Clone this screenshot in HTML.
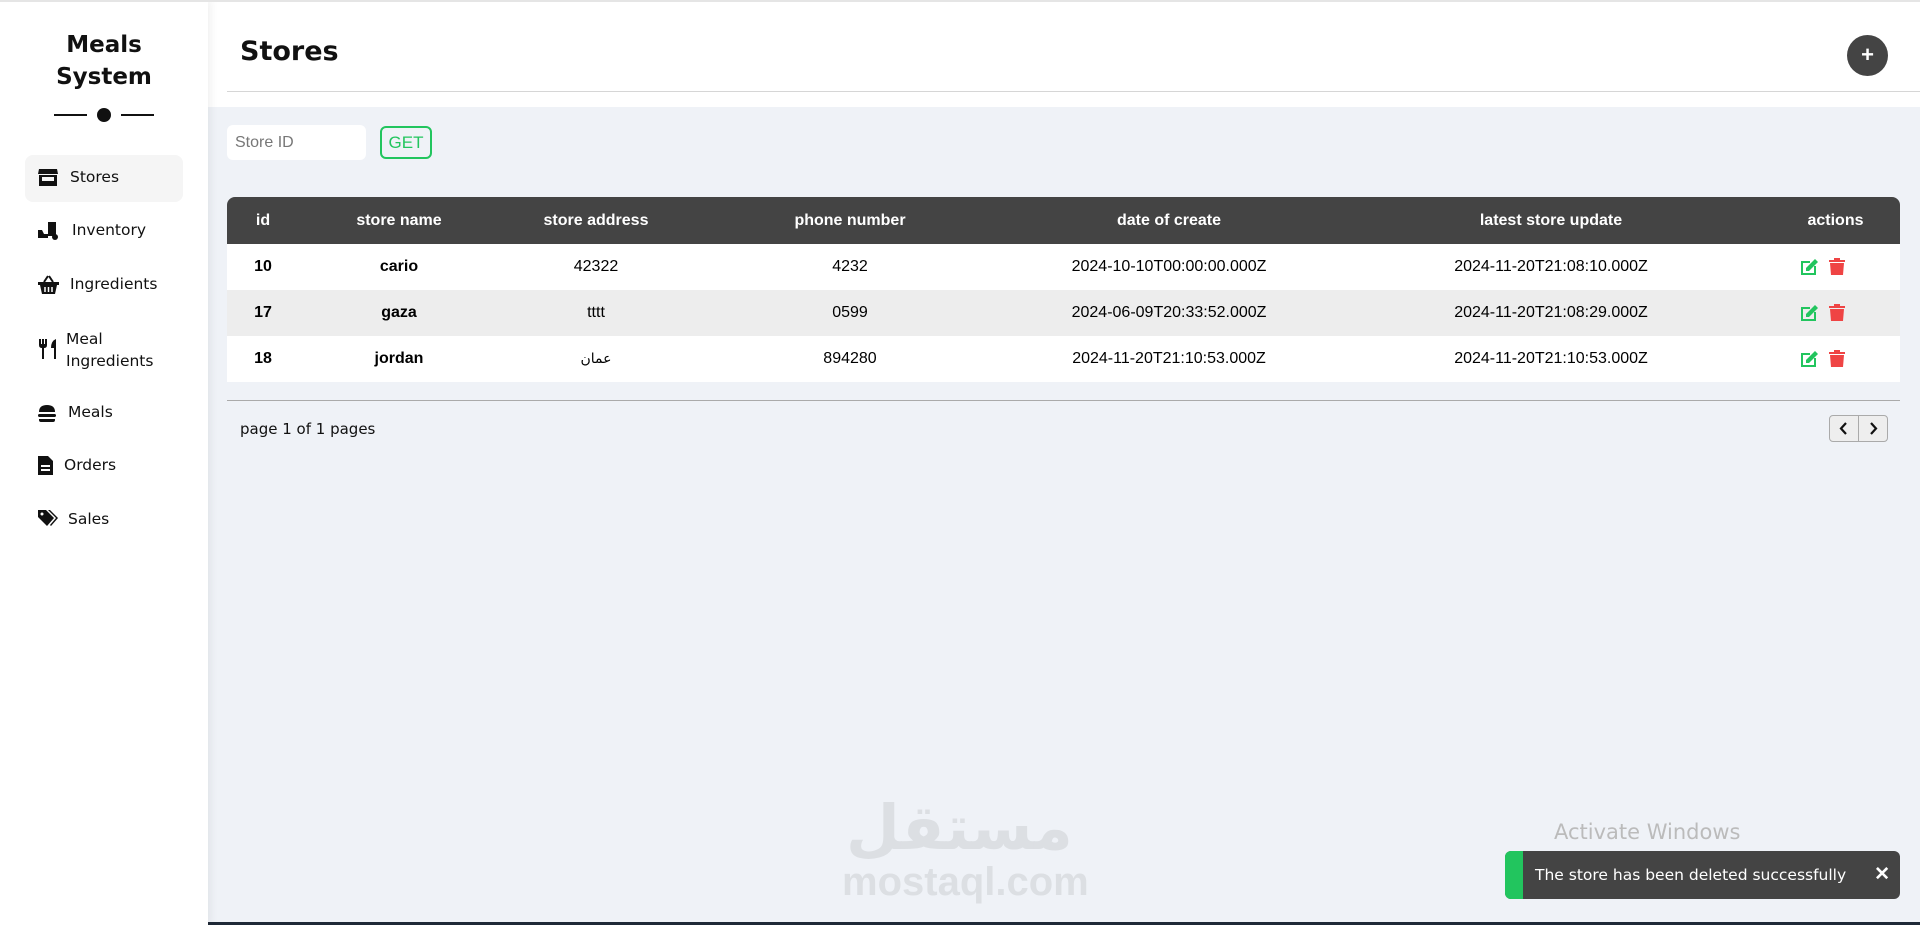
<!DOCTYPE html>
<html><head><meta charset="utf-8"><style>
*{box-sizing:border-box;margin:0;padding:0}
body{width:1920px;height:925px;overflow:hidden;background:#eff2f7;font-family:"Liberation Sans",sans-serif;position:relative}
.abs{position:absolute}
#side{left:0;top:0;width:208px;height:925px;background:#fff;box-shadow:3px 0 8px rgba(0,0,0,.06);z-index:2}
.brand{left:0;width:208px;text-align:center;font-family:"DejaVu Sans",sans-serif;font-weight:bold;font-size:23px;color:#111;line-height:32px;top:29px}
.nav{left:38px;color:#111;font-family:"DejaVu Sans","Liberation Sans",sans-serif;font-size:15.5px}
.ico{position:absolute;left:38px}
#head{left:208px;top:0;right:0;height:107px;background:#fff;border-top:2px solid #e6e6e6}
table{font-family:"Liberation Sans",Arial,sans-serif}
td,th{text-align:center;font-size:16px;height:46px;font-family:"Liberation Sans",Arial,sans-serif;color:#000}
th{color:#fff;font-weight:bold;height:47px}
</style></head><body>
<div class="abs" style="left:0;top:0;width:1920px;height:2px;background:#e5e5e5;z-index:3"></div>
<div id="side" class="abs">
 <div class="abs brand">Meals<br>System</div>
 <div class="abs" style="left:54px;top:114px;width:33px;height:2px;background:#111"></div>
 <div class="abs" style="left:97px;top:108px;width:14px;height:14px;border-radius:50%;background:#111"></div>
 <div class="abs" style="left:121px;top:114px;width:33px;height:2px;background:#111"></div>
 <div class="abs" style="left:25px;top:155px;width:158px;height:47px;background:#f5f5f5;border-radius:8px"></div>
 <svg class="ico" style="top:168px" width="20" height="18" viewBox="0 0 20 18"><path d="M1 1h18l1 5H0z" fill="#111"/><rect x="1" y="7" width="18" height="11" fill="#111"/><rect x="4" y="9" width="12" height="4" fill="#f5f5f5"/></svg>
 <div class="abs nav" style="left:70px;top:168px">Stores</div>
 <svg class="ico" style="top:222px" width="22" height="18" viewBox="0 0 22 18"><rect x="10" y="0" width="8" height="14" fill="#111"/><path d="M0 8h4l2 4h4v4H0z" fill="#111"/><circle cx="17" cy="15" r="3" fill="#111"/></svg>
 <div class="abs nav" style="left:72px;top:221px">Inventory</div>
 <svg class="ico" style="top:275px" width="21" height="19" viewBox="0 0 21 19"><path d="M6 7l4-6M15 7l-4-6" stroke="#111" stroke-width="2"/><path d="M0 7h21v3H0zM2 10h17l-2 9H4z" fill="#111"/><path d="M7 12v5M10.5 12v5M14 12v5" stroke="#fff" stroke-width="1.5"/></svg>
 <div class="abs nav" style="left:70px;top:275px">Ingredients</div>
 <svg class="ico" style="top:339px" width="20" height="20" viewBox="0 0 20 20"><path d="M1 0v6q0 3 3 3v11h2V9q3 0 3-3V0H7v5H6V0H4v5H3V0z" fill="#111"/><path d="M18 0q-5 2-5 9h3v11h2z" fill="#111"/></svg>
 <div class="abs nav" style="left:66px;top:328px;line-height:22px">Meal<br>Ingredients</div>
 <svg class="ico" style="top:405px" width="18" height="17" viewBox="0 0 18 17"><path d="M1 7Q1 0 9 0t8 7z" fill="#111"/><rect x="0" y="9" width="18" height="3" rx="1.5" fill="#111"/><path d="M1 14h16v1q0 2-2 2H3q-2 0-2-2z" fill="#111"/></svg>
 <div class="abs nav" style="left:68px;top:403px">Meals</div>
 <svg class="ico" style="top:456px" width="15" height="19" viewBox="0 0 15 19"><path d="M0 0h10l5 5v14H0z" fill="#111"/><rect x="3" y="9" width="9" height="2" fill="#fff"/><rect x="3" y="13" width="9" height="2" fill="#fff"/></svg>
 <div class="abs nav" style="left:64px;top:456px">Orders</div>
 <svg class="ico" style="top:510px" width="20" height="18" viewBox="0 0 20 18"><path d="M0 0h8l8 8-7 8-9-9z" fill="#111"/><path d="M10 0h2l8 8-7 8-1-1 6-7z" fill="#111"/><circle cx="4" cy="4" r="1.5" fill="#fff"/></svg>
 <div class="abs nav" style="left:68px;top:510px">Sales</div>
</div>
<div id="head" class="abs"></div>
<div class="abs" style="left:240px;top:36px;font-family:'DejaVu Sans',sans-serif;font-weight:bold;font-size:27px;color:#111">Stores</div>
<div class="abs" style="left:227px;top:91px;width:1693px;height:1px;background:#d6d6d6"></div>
<div class="abs" style="left:1847px;top:35px;width:41px;height:41px;border-radius:50%;background:#444;color:#fff;font-size:22px;font-weight:bold;text-align:center;line-height:40px">+</div>
<div class="abs" style="left:227px;top:125px;width:139px;height:35px;background:#fff;border-radius:6px;color:#777;font-size:16px;padding:9px 8px">Store ID</div>
<div class="abs" style="left:380px;top:126px;width:52px;height:33px;border:2px solid #22c55e;border-radius:6px;color:#22c55e;font-size:17px;text-align:center;line-height:29px">GET</div>
<table class="abs" style="left:227px;top:197px;width:1673px;border-collapse:collapse;table-layout:fixed">
<tr style="background:#444"><th style="width:72px;border-top-left-radius:8px">id</th><th style="width:200px">store name</th><th style="width:194px">store address</th><th style="width:314px">phone number</th><th style="width:324px">date of create</th><th style="width:440px">latest store update</th><th style="border-top-right-radius:8px">actions</th></tr>
<tr style="background:#fff"><td><b>10</b></td><td><b>cario</b></td><td>42322</td><td>4232</td><td>2024-10-10T00:00:00.000Z</td><td>2024-11-20T21:08:10.000Z</td><td></td></tr>
<tr style="background:#ededed"><td><b>17</b></td><td><b>gaza</b></td><td>tttt</td><td>0599</td><td>2024-06-09T20:33:52.000Z</td><td>2024-11-20T21:08:29.000Z</td><td></td></tr>
<tr style="background:#fff"><td><b>18</b></td><td><b>jordan</b></td><td style="font-family:'DejaVu Sans',sans-serif;font-size:14px">عمان</td><td>894280</td><td>2024-11-20T21:10:53.000Z</td><td>2024-11-20T21:10:53.000Z</td><td></td></tr>
</table>
<svg class="abs" style="left:1799px;top:257px" width="60" height="110" viewBox="0 0 60 110">
<g id="r"><path d="M2 4h9v2H4v10h11v-7h2v9H2z" fill="#22c55e"/><path d="M7 11l9-9 3 3-9 9H7z" fill="#22c55e"/><path d="M35 1h6v2h5v2H30V3h5z M31 6h14l-1 12H32z" fill="#ef4444"/></g>
<use href="#r" y="46"/><use href="#r" y="92"/>
</svg>
<div class="abs" style="left:227px;top:400px;width:1673px;height:1px;background:#aaa"></div>
<div class="abs" style="left:240px;top:420px;font-family:'DejaVu Sans',sans-serif;font-size:15px;color:#111">page 1 of 1 pages</div>
<div class="abs" style="left:1829px;top:415px;width:59px;height:27px;border:1px solid #aaa;border-radius:4px;background:#eee"></div>
<div class="abs" style="left:1858px;top:415px;width:1px;height:27px;background:#aaa"></div>
<svg class="abs" style="left:1829px;top:415px" width="59" height="27"><path d="M17 8l-5 5.5 5 5.5M42 8l5 5.5-5 5.5" stroke="#111" stroke-width="2.2" fill="none"/></svg>
<div class="abs" style="left:846px;top:792px;font-family:'DejaVu Sans',sans-serif;font-size:62px;font-weight:bold;color:#dcdfe3;line-height:72px">مستقل</div>
<div class="abs" style="left:842px;top:860px;font-size:40px;font-weight:bold;color:#dcdfe3">mostaql.com</div>
<div class="abs" style="left:1554px;top:820px;font-family:'DejaVu Sans',sans-serif;font-size:21px;color:#bbb">Activate Windows</div>
<div class="abs" style="left:1554px;top:852px;font-family:'DejaVu Sans',sans-serif;font-size:15px;color:#bbb">Go to Settings to activate Windows.</div>
<div class="abs" style="left:1505px;top:851px;width:395px;height:48px;background:#444;border-radius:6px;overflow:hidden">
 <div style="position:absolute;left:0;top:0;width:18px;height:48px;background:#22c55e"></div>
 <div style="position:absolute;left:30px;top:15px;color:#fff;font-family:'DejaVu Sans',sans-serif;font-size:15.5px">The store has been deleted successfully</div>
 <div style="position:absolute;right:10px;top:12px;color:#fff;font-size:19px;font-weight:bold">✕</div>
</div>
<div class="abs" style="left:0;top:922px;width:1920px;height:3px;background:#1f2937"></div>
</body></html>
